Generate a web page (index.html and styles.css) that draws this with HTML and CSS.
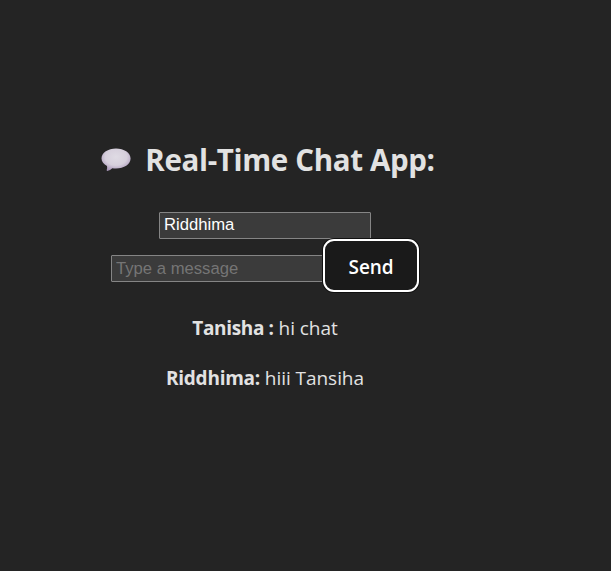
FILE: index.html
```
<!DOCTYPE html>
<html lang="en">
<head>
<meta charset="utf-8">
<title>Real-Time Chat App</title>
<link rel="stylesheet" href="styles.css">
</head>
<body>
<main class="app">
  <h1 class="title">
    <svg class="bubble" width="30" height="24" viewBox="0 0 30 24" aria-hidden="true">
      <defs>
        <radialGradient id="shade" cx="50%" cy="38%" r="62%">
          <stop offset="0" stop-color="#dfdbe4"/>
          <stop offset=".6" stop-color="#d6cfdc"/>
          <stop offset="1" stop-color="#ab98bb"/>
        </radialGradient>
      </defs>
      <path fill="url(#shade)" d="M15 .5C23 .5 29.600 4.800 29.600 10.500S23 20.500 15 20.500Q13 20.500 11.300 20.200Q9.300 22.400 6.200 22.900Q5.500 22.900 5.700 22.100Q6.500 20.300 6 18.100C2.800 16.300.5 13.700.5 10.500.5 4.800 7 .5 15 .5Z"/>
    </svg>
    <span class="title-text">Real-Time Chat App:</span>
  </h1>
  <input class="field" type="text" value="Riddhima" aria-label="Name">
  <form class="composer">
    <input class="field" type="text" placeholder="Type a message">
    <button class="send" type="button">Send</button>
  </form>
  <div class="messages">
    <p class="message"><strong class="author author-spaced">Tanisha :</strong> hi chat</p>
    <p class="message"><strong class="author">Riddhima:</strong> hiii Tansiha</p>
  </div>
</main>
</body>
</html>
```
FILE: styles.css
```
* { box-sizing: border-box; }
body {
  margin: 0;
  min-height: 571px;
  background: #242424;
  color: #e2e2e2;
  font-family: "Open Sans", "Noto Sans", sans-serif;
}
.app {
  width: 530px;
  padding-top: 138px;
  display: flex;
  flex-direction: column;
  align-items: center;
}
.title {
  display: flex;
  align-items: center;
  gap: 14px;
  height: 44px;
  margin: 0 0 30px;
  padding-left: 6px;
  font-size: 29.500px;
  line-height: 44px;
  font-weight: 700;
  white-space: nowrap;
  letter-spacing: -0.350px;
}
.bubble { flex: none; }
.field {
  width: 212px;
  height: 27px;
  margin: 0;
  padding: 0 4px 2px;
  border: 1px solid #858585;
  border-radius: 1px;
  background: #3b3b3b;
  color: #fff;
  font: 16.670px/23px "Liberation Sans", sans-serif;
  outline: none;
}
.field::placeholder { color: #757575; opacity: 1; }
.composer {
  display: flex;
  align-items: flex-start;
  height: 54px;
}
.composer .field { margin-top: 16px; padding: 1px 4px 0; }
.send {
  width: 96px;
  height: 53px;
  margin: 0;
  padding: 2px 0 0;
  border: 2px solid #fff;
  border-radius: 11px;
  background: #1a1a1a;
  box-shadow: 0 0 0 1px #101010;
  color: #fff;
  font: 600 19px/28px "Open Sans", "Noto Sans", sans-serif;
  letter-spacing: -0.100px;
}
.messages { margin-top: 20px; text-align: center; }
.message {
  margin: 0 0 20px;
  font-size: 19px;
  line-height: 30px;
  letter-spacing: -0.050px;
}
.author { font-weight: 700; letter-spacing: -0.250px; }
.author-spaced { letter-spacing: -0.350px; }
```
